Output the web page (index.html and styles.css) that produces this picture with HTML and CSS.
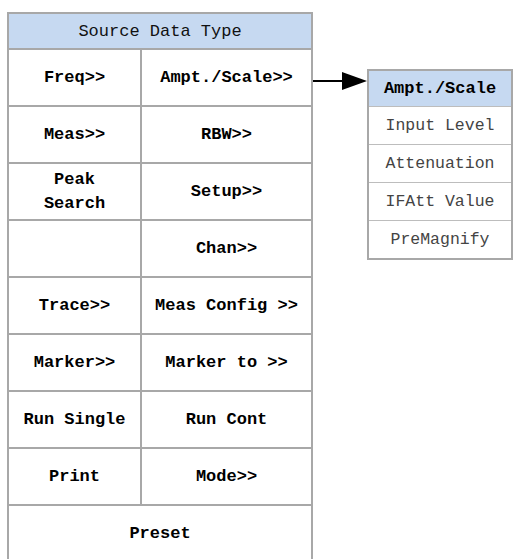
FILE: index.html
```html
<!DOCTYPE html>
<html lang="en">
<head>
    <meta charset="UTF-8">
    <meta name="viewport" content="width=device-width, initial-scale=1.0">
    <title>Source Data Type</title>
    <link rel="stylesheet" href="styles.css">
</head>
<body>
    <div class="layout">
        <div class="menuGrid">
            <div class="gridTitle">Source Data Type</div>
            <div class="cell">Freq&gt;&gt;</div>
            <div class="cell">Ampt./Scale&gt;&gt;</div>
            <div class="cell">Meas&gt;&gt;</div>
            <div class="cell">RBW&gt;&gt;</div>
            <div class="cell">Peak<br>Search</div>
            <div class="cell">Setup&gt;&gt;</div>
            <div class="cell"></div>
            <div class="cell">Chan&gt;&gt;</div>
            <div class="cell">Trace&gt;&gt;</div>
            <div class="cell">Meas Config &gt;&gt;</div>
            <div class="cell">Marker&gt;&gt;</div>
            <div class="cell">Marker to &gt;&gt;</div>
            <div class="cell">Run Single</div>
            <div class="cell">Run Cont</div>
            <div class="cell">Print</div>
            <div class="cell">Mode&gt;&gt;</div>
            <div class="cell wide">Preset</div>
        </div>

        <svg class="connector" width="54" height="20" viewBox="0 0 54 20">
            <line x1="0" y1="10" x2="32" y2="10" stroke="#000" stroke-width="2"/>
            <polygon points="29,1 54,10 29,19" fill="#000"/>
        </svg>

        <div class="subMenu">
            <div class="subTitle">Ampt./Scale</div>
            <div class="subItem">Input Level</div>
            <div class="subItem">Attenuation</div>
            <div class="subItem">IFAtt Value</div>
            <div class="subItem">PreMagnify</div>
        </div>
    </div>
</body>
</html>
```

FILE: styles.css
```css
html,
body {
    height: 559px;
    overflow: hidden;
}

body {
    font-family: "Liberation Mono", "DejaVu Sans Mono", monospace;
    font-size: 17px;
    margin: 0;
    padding: 12px 0 0 7px;
    background-color: #ffffff;
    color: #000;
}

.layout {
    display: flex;
    align-items: flex-start;
}

.menuGrid {
    display: grid;
    grid-template-columns: 131px 169px;
    grid-template-rows: 34px repeat(9, 55px);
    gap: 2px;
    padding: 2px;
    background-color: #a8a8a8;
    flex-shrink: 0;
}

.gridTitle {
    grid-column: span 2;
    background-color: #c6d9f1;
    display: flex;
    align-items: center;
    justify-content: center;
    color: #111;
}

.cell {
    background-color: #fff;
    display: flex;
    align-items: center;
    justify-content: center;
    text-align: center;
    font-weight: bold;
    line-height: 24px;
}

.wide {
    grid-column: span 2;
}

.connector {
    margin-top: 59px;
    flex-shrink: 0;
}

.subMenu {
    margin-top: 57px;
    width: 142px;
    border: 2px solid #a8a8a8;
    background-color: #bdbdbd;
    display: flex;
    flex-direction: column;
    gap: 1px;
}

.subTitle {
    height: 35px;
    background-color: #c6d9f1;
    display: flex;
    align-items: center;
    justify-content: center;
    font-weight: bold;
}

.subItem {
    height: 37px;
    background-color: #fff;
    display: flex;
    align-items: center;
    justify-content: center;
    color: #444;
    font-size: 16.5px;
}
```
